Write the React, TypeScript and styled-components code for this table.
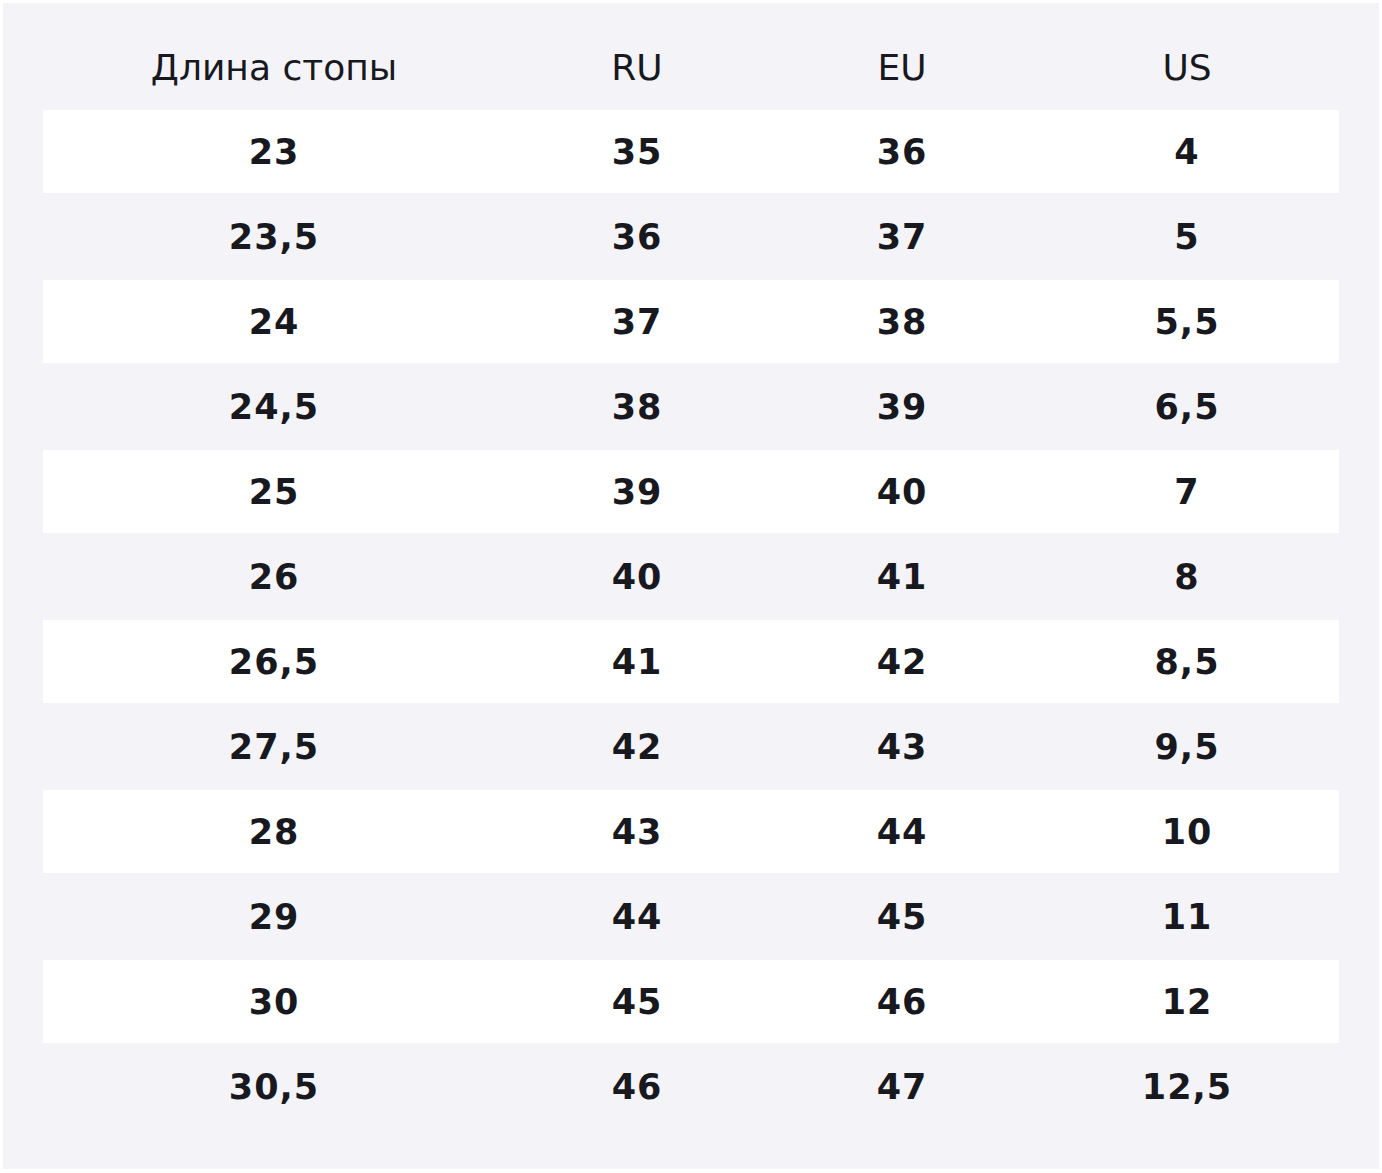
import React from "react";
import styled, { createGlobalStyle } from "styled-components";

const rows: string[][] = [
	["23", "35", "36", "4"],
	["23,5", "36", "37", "5"],
	["24", "37", "38", "5,5"],
	["24,5", "38", "39", "6,5"],
	["25", "39", "40", "7"],
	["26", "40", "41", "8"],
	["26,5", "41", "42", "8,5"],
	["27,5", "42", "43", "9,5"],
	["28", "43", "44", "10"],
	["29", "44", "45", "11"],
	["30", "45", "46", "12"],
	["30,5", "46", "47", "12,5"],
];

const headers = ["Длина стопы", "RU", "EU", "US"];

export default function App() {
	return (
		<>
			<GlobalStyle />
			<Panel>
				<HeaderRow>
					{headers.map((h) => (
						<HeadCell key={h}>{h}</HeadCell>
					))}
				</HeaderRow>
				{rows.map((row, i) => (
					<Row key={i} $striped={i % 2 === 0}>
						{row.map((cell, j) => (
							<Cell key={j}>{cell}</Cell>
						))}
					</Row>
				))}
			</Panel>
		</>
	);
}

const GlobalStyle = createGlobalStyle`
    body {
        margin: 0;
        padding: 3px;
        background: #ffffff;
        font-family: "DejaVu Sans", sans-serif;
    }
`;

const Panel = styled.div`
    background: #f4f4f8;
    padding: 22px 40px 39px;
    color: #18181f;
`;

const HeaderRow = styled.div`
    display: grid;
    grid-template-columns: 462px 264px 266px 304px;
    height: 85px;
    align-items: center;
`;

const HeadCell = styled.div`
    text-align: center;
    font-size: 36px;
    font-weight: 400;
`;

const Row = styled.div<{ $striped: boolean }>`
    display: grid;
    grid-template-columns: 462px 264px 266px 304px;
    height: 85px;
    box-sizing: border-box;
    align-items: center;
    border-bottom: 2px solid transparent;
    background: ${(p) => (p.$striped ? "#ffffff" : "transparent")};
    background-clip: padding-box;
`;

const Cell = styled.div`
    text-align: center;
    font-size: 35px;
    font-weight: 700;
    letter-spacing: 1px;
`;
